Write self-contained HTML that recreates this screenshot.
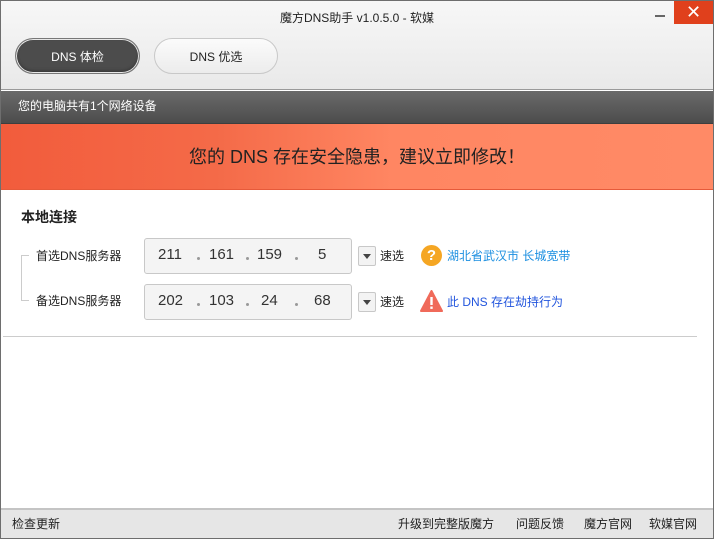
<!DOCTYPE html><html><head><meta charset="utf-8"><style>
*{margin:0;padding:0;box-sizing:border-box}
body{width:714px;height:539px;overflow:hidden;font-family:"Liberation Sans","Noto Sans CJK SC",sans-serif;font-size:12px;color:#222;background:#fff;position:relative}
.win{position:absolute;inset:0;border:1px solid #6e6e6e}
.abs{position:absolute}
.hdr{left:1px;top:1px;width:712px;height:89px;background:linear-gradient(#f7f7f7,#e9e9e9);border-bottom:1px solid #9a9a9a}
.btn{top:38px;height:36px;border-radius:18px;text-align:center;line-height:36px;font-size:12px}
.bar{left:1px;top:91px;width:712px;height:33px;background:linear-gradient(#6a6a6a,#4c4c4c);color:#fff;line-height:31px;padding-left:17px;font-size:12px;border-bottom:1px solid #3e3e3e}
.ban{left:1px;top:124px;width:712px;height:66px;background:linear-gradient(90deg,#f25c3c 0%,#f46a48 30%,#ff8662 55%,#ff8a66 100%);border-bottom:1px solid #e65a3a;text-align:center;line-height:66px;font-size:18px;color:#222}
.ip{left:144px;width:208px;height:36px;border:1px solid #c8c8c8;border-radius:3px;background:#f4f4f4;font-family:"Liberation Sans",sans-serif;font-size:15px;color:#333}
.ip span{position:absolute;top:7px}
.ip i{position:absolute;top:18px;width:3px;height:3px;background:#999;border-radius:50%}
.dd{left:358px;width:18px;height:20px;border:1px solid #c8c8c8;border-radius:2px;background:#f3f3f3}
.dd:after{content:"";position:absolute;left:4px;top:7px;border:4px solid transparent;border-top:5px solid #444}
.ft{left:1px;top:508px;width:712px;height:30px;background:#e6e6e6;border-top:2px solid #c4c4c4;line-height:28px}
</style></head><body>
<div class="win"></div>
<div class="abs hdr"></div>
<div class="abs" style="left:0;top:9px;width:714px;text-align:center;font-size:12px">魔方DNS助手 v1.0.5.0 - 软媒</div>
<div class="abs" style="left:655px;top:15px;width:10px;height:2px;background:#666"></div>
<div class="abs" style="left:674px;top:1px;width:39px;height:23px;background:#e0401c;color:#fff;text-align:center;font-size:18px;line-height:23px">✕</div>
<div class="abs btn" style="left:15px;width:125px;background:#4c4c4c;color:#fff;border:1px solid #777;box-shadow:inset 0 0 0 1px #e8e8e8,inset 0 -2px 3px #333">DNS 体检</div>
<div class="abs btn" style="left:154px;width:124px;background:linear-gradient(#fbfbfb,#ececec);border:1px solid #c8c8c8">DNS 优选</div>
<div class="abs bar">您的电脑共有1个网络设备</div>
<div class="abs ban">您的 DNS 存在安全隐患，建议立即修改！</div>
<div class="abs" style="left:21px;top:207px;font-size:14px;font-weight:bold">本地连接</div>
<div class="abs" style="left:21px;top:255px;width:1px;height:45px;background:#ccc"></div>
<div class="abs" style="left:21px;top:255px;width:8px;height:1px;background:#ccc"></div>
<div class="abs" style="left:21px;top:300px;width:8px;height:1px;background:#ccc"></div>
<div class="abs" style="left:36px;top:247px">首选DNS服务器</div>
<div class="abs" style="left:36px;top:292px">备选DNS服务器</div>
<div class="abs ip" style="top:238px"><span style="left:13px">211</span><i style="left:52px"></i><span style="left:64px">161</span><i style="left:101px"></i><span style="left:112px">159</span><i style="left:150px"></i><span style="left:173px">5</span></div>
<div class="abs ip" style="top:284px"><span style="left:13px">202</span><i style="left:52px"></i><span style="left:64px">103</span><i style="left:101px"></i><span style="left:116px">24</span><i style="left:150px"></i><span style="left:169px">68</span></div>
<div class="abs dd" style="top:246px"></div>
<div class="abs dd" style="top:292px"></div>
<div class="abs" style="left:380px;top:247px">速选</div>
<div class="abs" style="left:380px;top:293px">速选</div>
<div class="abs" style="left:421px;top:245px;width:21px;height:21px;border-radius:50%;background:#f5a623;color:#fff;font-weight:bold;text-align:center;line-height:21px;font-size:15px">?</div>
<div class="abs" style="left:447px;top:247px;color:#1a8ee0">湖北省武汉市 长城宽带</div>
<svg class="abs" style="left:420px;top:290px" width="23" height="22"><path d="M11.5 1 L22 21 L1 21 Z" fill="#f06a5a" stroke="#f06a5a" stroke-linejoin="round" stroke-width="2"/><rect x="10.3" y="7" width="2.4" height="8" fill="#fff"/><rect x="10.3" y="16.5" width="2.4" height="2.4" fill="#fff"/></svg>
<div class="abs" style="left:447px;top:293px;color:#2255dd">此 DNS 存在劫持行为</div>
<div class="abs" style="left:3px;top:336px;width:694px;height:1px;background:#ccc"></div>
<div class="abs ft"><span class="abs" style="left:11px">检查更新</span><span class="abs" style="left:397px">升级到完整版魔方</span><span class="abs" style="left:515px">问题反馈</span><span class="abs" style="left:583px">魔方官网</span><span class="abs" style="left:648px">软媒官网</span></div>
</body></html>
